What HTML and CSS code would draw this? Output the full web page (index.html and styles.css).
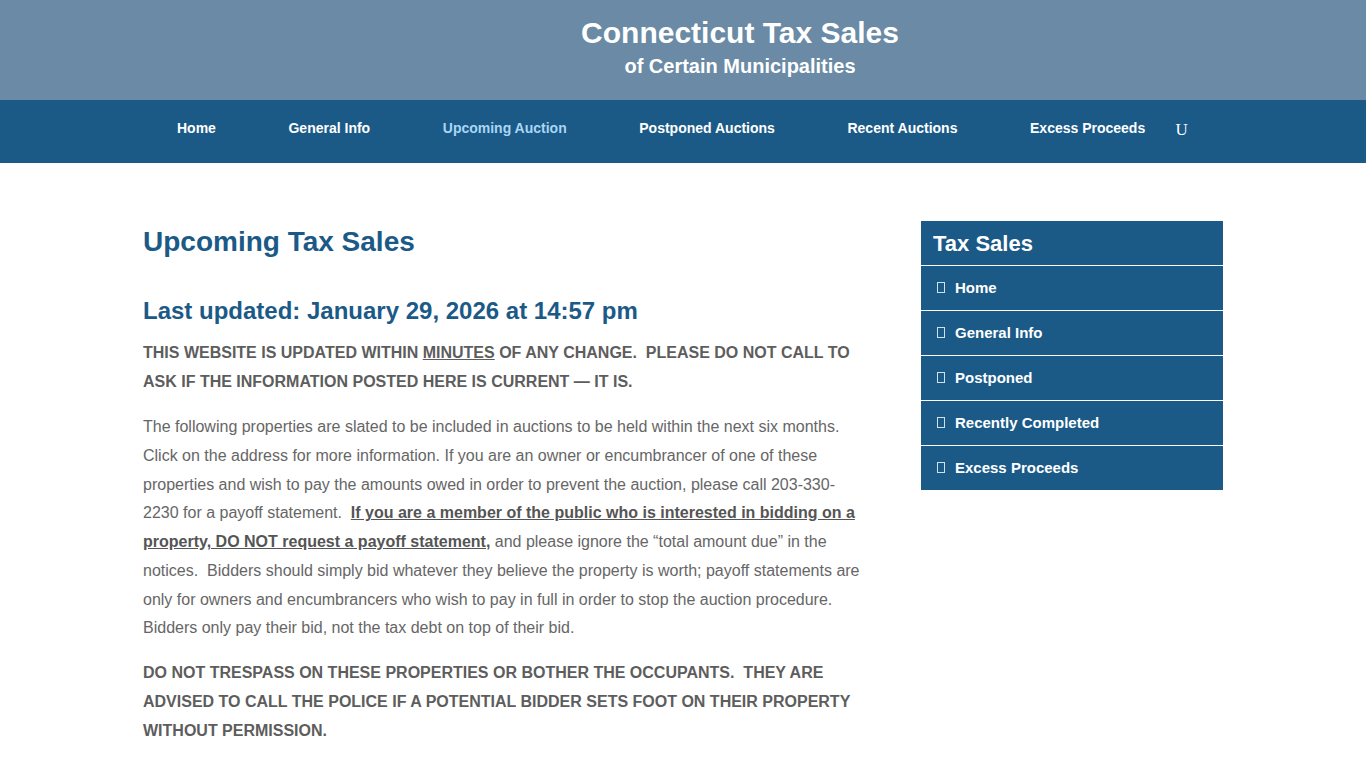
FILE: index.html
```html
<!DOCTYPE html>
<html lang="en">
<head>
<meta charset="utf-8">
<title>Connecticut Tax Sales</title>
<link rel="stylesheet" href="styles.css">
</head>
<body>
<header class="site-header">
  <div class="brand">
    <div class="brand-title">Connecticut Tax Sales</div>
    <div class="brand-sub">of Certain Municipalities</div>
  </div>
</header>
<nav class="main-nav">
  <ul class="nav-list">
    <li><a href="#">Home</a></li>
    <li><a href="#">General Info</a></li>
    <li><a href="#" class="current">Upcoming Auction</a></li>
    <li><a href="#">Postponed Auctions</a></li>
    <li><a href="#">Recent Auctions</a></li>
    <li><a href="#">Excess Proceeds</a></li>
    <li class="search-icon">U</li>
  </ul>
</nav>
<div class="page">
  <main class="content">
    <h1 class="page-title">Upcoming Tax Sales</h1>
    <h2 class="updated">Last updated: January 29, 2026 at 14:57 pm</h2>
    <p class="notice first">THIS WEBSITE IS UPDATED WITHIN <u>MINUTES</u> OF ANY CHANGE.&nbsp; PLEASE DO NOT CALL TO ASK IF THE INFORMATION POSTED HERE IS CURRENT — IT IS.</p>
    <p class="body">The following properties are slated to be included in auctions to be held within the next six months. Click on the address for more information. If you are an owner or encumbrancer of one of these properties and wish to pay the amounts owed in order to prevent the auction, please call 203-330-2230 for a payoff statement.&nbsp; <strong><u>If you are a member of the public who is interested in bidding on a property, DO NOT request a payoff statement,</u></strong> and please ignore the “total amount due” in the notices.&nbsp; Bidders should simply bid whatever they believe the property is worth; payoff statements are only for owners and encumbrancers who wish to pay in full in order to stop the auction procedure. Bidders only pay their bid, not the tax debt on top of their bid.</p>
    <p class="notice">DO NOT TRESPASS ON THESE PROPERTIES OR BOTHER THE OCCUPANTS.&nbsp; THEY ARE ADVISED TO CALL THE POLICE IF A POTENTIAL BIDDER SETS FOOT ON THEIR PROPERTY WITHOUT PERMISSION.</p>
  </main>
  <aside class="sidebar">
    <div class="widget">
      <h3 class="widget-title">Tax Sales</h3>
      <ul class="widget-list">
        <li><span class="box"></span>Home</li>
        <li><span class="box"></span>General Info</li>
        <li><span class="box"></span>Postponed</li>
        <li><span class="box"></span>Recently Completed</li>
        <li><span class="box"></span>Excess Proceeds</li>
      </ul>
    </div>
  </aside>
</div>
</body>
</html>
```
FILE: styles.css
```css
html, body {
  margin: 0;
  padding: 0;
  background: #fff;
  font-family: "Liberation Sans", Arial, sans-serif;
}

.site-header {
  background: #6a8aa5;
  height: 100px;
  display: flex;
  justify-content: center;
  color: #fff;
}
.brand {
  padding-left: 114px;
  text-align: center;
  padding-top: 15px;
}
.brand-title {
  font-size: 30px;
  font-weight: bold;
  line-height: 36px;
}
.brand-sub {
  font-size: 20px;
  font-weight: bold;
  line-height: 26px;
  margin-top: 2px;
}

.main-nav {
  background: #1b5a87;
  height: 63px;
}
.nav-list {
  list-style: none;
  margin: 0;
  padding: 0 0 0 140.7px;
  display: flex;
  align-items: center;
  height: 63px;
}
.nav-list li a {
  display: block;
  padding: 0 36.3px 6px;
  color: #fff;
  font-weight: bold;
  font-size: 14px;
  text-decoration: none;
  line-height: 57px;
}
.nav-list li a.current {
  color: #a9d6f5;
}
.search-icon {
  color: #fff;
  font-family: "Liberation Serif", serif;
  font-size: 17px;
  margin-left: -6px;
  padding-bottom: 4px;
}

.page {
  width: 1080px;
  margin: 0 auto;
  display: flex;
  justify-content: space-between;
  padding-top: 58px;
}
.content {
  width: 720px;
}
.page-title {
  margin: 0;
  color: #1b5a87;
  font-size: 28px;
  line-height: 40px;
  font-weight: bold;
  margin-top: 1px;
}
.updated {
  margin: 29px 0 0;
  color: #1b5a87;
  font-size: 24px;
  line-height: 40px;
  font-weight: bold;
}
.notice {
  margin: 0 0 17px;
  color: #5d5d5d;
  font-size: 16px;
  font-weight: bold;
  line-height: 29px;
}
.notice.first {
  margin-top: 7px;
}
.body {
  margin: 0 0 15px;
  color: #666;
  font-size: 16px;
  line-height: 28.75px;
}
.body strong {
  color: #555;
}

.sidebar {
  width: 302px;
}
.widget {
  background: #1b5a87;
}
.widget-title {
  margin: 0;
  color: #fff;
  font-size: 22px;
  font-weight: bold;
  line-height: 44px;
  padding: 1px 0 0 12px;
  height: 43px;
  border-bottom: 1px solid #fff;
}
.widget-list {
  list-style: none;
  margin: 0;
  padding: 0;
}
.widget-list li {
  color: #fff;
  font-weight: bold;
  font-size: 15px;
  height: 42px;
  display: flex;
  align-items: center;
  padding-left: 16px;
  padding-bottom: 2px;
  border-bottom: 1px solid #fff;
}
.widget-list li:last-child {
  border-bottom: none;
}
.box {
  display: inline-block;
  width: 6px;
  height: 9px;
  border: 1px solid #cfe0ee;
  margin-right: 10px;
  margin-top: 0;
}
```
